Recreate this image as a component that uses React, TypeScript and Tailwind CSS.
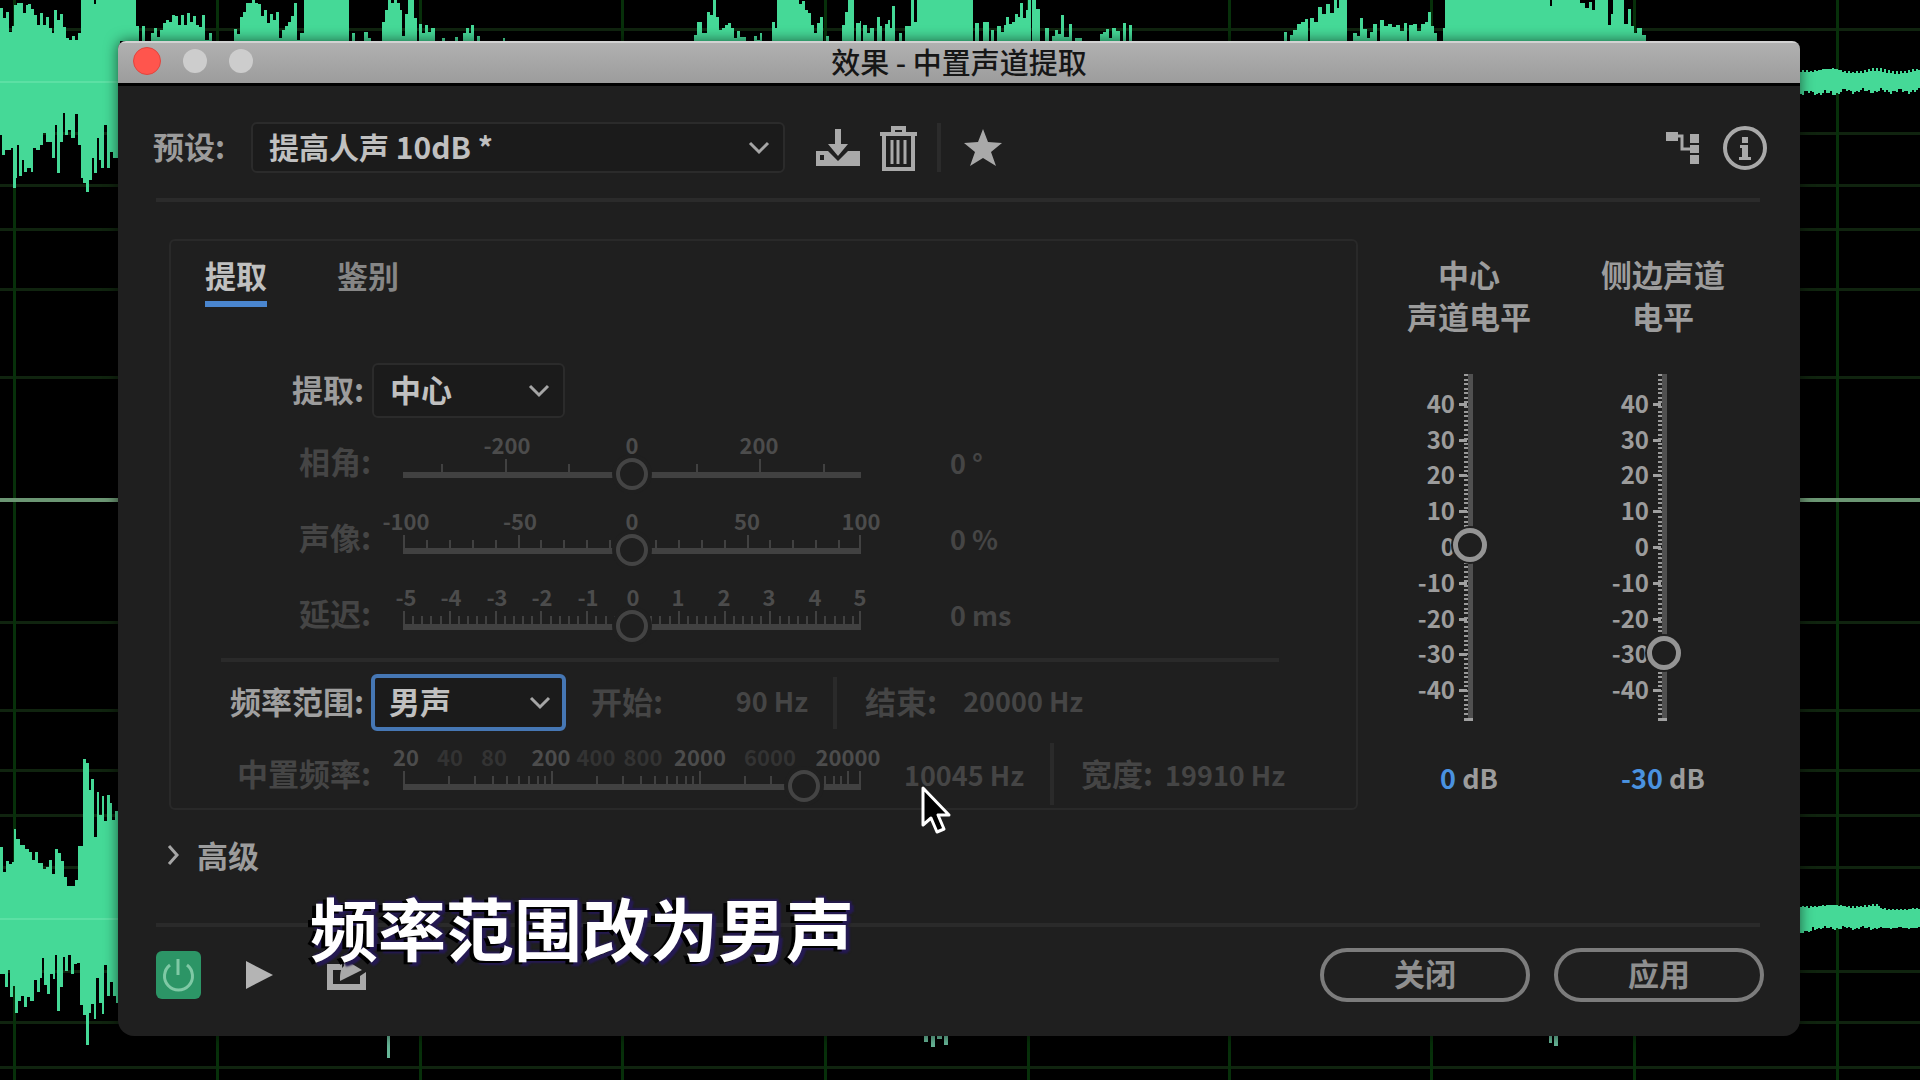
import type { ReactNode } from "react";
import clsx from "clsx";

type Point = [number, number];

const GRID_X = [14, 217, 420, 622, 825, 1028, 1229, 1431, 1634, 1837];
const GRID_Y = [29, 133, 185, 229, 289, 377, 622, 710, 770, 815, 867, 971, 1022, 1067];

// x, y pairs of the upper channel peaks
const TOP_PEAKS: Point[] = [
  [0, 8], [3, 18], [6, 12], [9, 32], [12, 26], [14, 5], [17, 3], [20, 3], [23, 13], [26, 5], [28, 4], [31, 9],
  [34, 15], [37, 25], [40, 13], [43, 25], [46, 17], [49, 28], [52, 33], [54, 10], [57, 20], [60, 14], [63, 27],
  [66, 38], [69, 42], [72, 36], [75, 42], [78, 33], [81, 0], [94, 4], [96, 0], [136, 26], [139, 41], [142, 26],
  [145, 41], [151, 33], [154, 28], [157, 37], [160, 30], [163, 23], [166, 20], [169, 22], [172, 15], [175, 16],
  [178, 25], [181, 15], [184, 25], [187, 13], [190, 22], [193, 16], [196, 25], [199, 27], [202, 15], [205, 40],
  [209, 33], [212, 41], [234, 29], [237, 34], [240, 17], [243, 12], [246, 3], [249, 3], [252, 0], [255, 3],
  [258, 4], [261, 16], [264, 10], [267, 23], [270, 14], [273, 20], [276, 12], [279, 38], [282, 30], [285, 26],
  [288, 22], [291, 16], [294, 3], [297, 40], [300, 33], [304, 0], [349, 41], [352, 33], [355, 41], [364, 32],
  [368, 38], [371, 41], [382, 22], [385, 10], [388, 0], [391, 3], [394, 0], [397, 3], [400, 10], [402, 36],
  [405, 14], [408, 0], [414, 18], [417, 41], [419, 24], [422, 33], [425, 25], [428, 32], [431, 28], [435, 41],
  [442, 38], [445, 41], [455, 37], [458, 41], [463, 33], [466, 28], [469, 33], [471, 25], [474, 41], [477, 36],
  [480, 41], [503, 38], [505, 41], [694, 35], [697, 22], [702, 33], [707, 12], [710, 15], [713, 0], [716, 17],
  [719, 30], [722, 28], [725, 25], [728, 23], [731, 28], [734, 38], [737, 31], [740, 37], [746, 41], [754, 36],
  [757, 40], [760, 33], [762, 41], [772, 22], [775, 28], [777, 0], [799, 4], [802, 1], [805, 10], [808, 13],
  [811, 25], [814, 33], [817, 23], [820, 17], [823, 41], [826, 36], [829, 41], [842, 25], [845, 12], [848, 0],
  [854, 41], [856, 23], [860, 21], [861, 41], [863, 25], [867, 33], [870, 28], [874, 41], [877, 17], [880, 26],
  [882, 41], [885, 24], [888, 20], [890, 28], [892, 6], [895, 41], [899, 33], [902, 41], [905, 26], [911, 0],
  [914, 22], [917, 0], [973, 41], [975, 23], [979, 41], [983, 22], [989, 41], [991, 30], [994, 41], [997, 26],
  [1001, 32], [1004, 25], [1006, 17], [1009, 24], [1012, 22], [1015, 14], [1018, 17], [1020, 3], [1023, 18],
  [1026, 10], [1028, 0], [1031, 41], [1032, 0], [1036, 9], [1040, 41], [1045, 28], [1049, 41], [1052, 36],
  [1055, 30], [1058, 34], [1061, 15], [1064, 37], [1069, 24], [1072, 41], [1075, 38], [1082, 41], [1100, 34],
  [1103, 32], [1106, 29], [1109, 38], [1112, 28], [1116, 31], [1120, 41], [1123, 23], [1126, 41], [1129, 25],
  [1132, 41], [1284, 32], [1287, 41], [1290, 35], [1293, 30], [1297, 24], [1301, 22], [1305, 19], [1308, 41],
  [1310, 18], [1314, 22], [1318, 7], [1322, 14], [1326, 4], [1330, 13], [1334, 0], [1337, 8], [1339, 0],
  [1347, 41], [1353, 33], [1357, 36], [1360, 18], [1363, 29], [1367, 38], [1370, 32], [1373, 24], [1377, 41],
  [1380, 20], [1384, 26], [1388, 24], [1392, 27], [1396, 25], [1400, 31], [1404, 23], [1407, 41], [1409, 25],
  [1413, 24], [1417, 31], [1421, 24], [1425, 22], [1428, 12], [1431, 26], [1434, 33], [1437, 41], [1443, 28],
  [1445, 0], [1550, 6], [1552, 0], [1580, 3], [1585, 8], [1589, 2], [1592, 10], [1595, 0], [1608, 25], [1611, 14],
  [1613, 0], [1624, 24], [1628, 9], [1631, 26], [1634, 33], [1637, 28], [1642, 35], [1646, 41],
];

const TOP_LEFT_FLOOR: Point[] = [
  [0, 135], [2, 155], [5, 150], [8, 150], [11, 148], [13, 188], [16, 178], [17, 145], [19, 176], [22, 160],
  [24, 172], [27, 168], [31, 172], [33, 148], [36, 150], [40, 145], [43, 133], [46, 142], [52, 158], [55, 125],
  [57, 173], [60, 142], [63, 113], [65, 135], [68, 130], [71, 138], [75, 114], [78, 145], [81, 178], [83, 183],
  [86, 192], [89, 180], [92, 158], [94, 173], [97, 138], [99, 160], [101, 168], [104, 125], [107, 168],
  [110, 152], [113, 158], [120, 158],
];

const BOTTOM_LEFT_TOP: Point[] = [
  [0, 847], [3, 872], [6, 861], [9, 864], [12, 862], [14, 829], [16, 839], [20, 845], [25, 849], [29, 852],
  [32, 860], [35, 852], [38, 863], [43, 869], [46, 867], [49, 860], [52, 874], [55, 849], [58, 853], [61, 861],
  [64, 877], [67, 886], [71, 886], [75, 880], [78, 846], [83, 759], [86, 763], [89, 790], [91, 779], [94, 837],
  [97, 792], [99, 815], [102, 796], [104, 821], [107, 795], [110, 803], [112, 820], [115, 811], [120, 811],
];

const BOTTOM_LEFT_FLOOR: Point[] = [
  [0, 974], [5, 987], [8, 970], [10, 997], [13, 986], [15, 1013], [18, 1001], [21, 996], [24, 1007], [27, 997],
  [30, 1001], [34, 980], [37, 992], [40, 978], [42, 958], [44, 985], [47, 994], [50, 974], [53, 979], [55, 955],
  [57, 1011], [60, 987], [63, 957], [65, 971], [68, 955], [71, 974], [74, 964], [77, 963], [80, 1005],
  [83, 1015], [86, 1045], [89, 1013], [91, 1004], [94, 1019], [96, 978], [99, 1003], [102, 1014], [104, 965],
  [107, 996], [110, 982], [113, 996], [116, 1003], [120, 1003],
];

function stepEdge(points: Point[]) {
  return points
    .map(([x, y], i) => {
      const next = points[i + 1];
      return `L${x} ${y}` + (next ? `L${next[0]} ${y}` : "");
    })
    .join("");
}

function block(top: Point[], floor: Point[]) {
  const back = [...floor]
    .reverse()
    .map(([x, y], i, all) => (i ? `L${all[i - 1][0]} ${y}L${x} ${y}` : `L${x} ${y}`))
    .join("");
  return `M${top[0][0]} ${top[0][1]}${stepEdge(top)}${back}Z`;
}

// low level noise at the quiet end of a channel
function noise(from: number, to: number, top: number, bottom: number, swing: number) {
  const upper: Point[] = [];
  const lower: Point[] = [];
  for (let x = from; x <= to; x += 2) {
    upper.push([x, top + Math.round(Math.sin(x * 2.3) * Math.cos(x * 0.7) * swing)]);
    lower.push([x, bottom + Math.round(Math.cos(x * 1.9) * Math.sin(x * 0.9) * swing)]);
  }
  return block(upper, lower);
}

function Waveform() {
  return (
    <svg
      className="absolute inset-0 h-full w-full"
      viewBox="0 0 1920 1080"
      preserveAspectRatio="none"
      aria-hidden="true"
    >
      {GRID_Y.map((y) => (
        <rect key={y} x="0" y={y - 1} width="1920" height="3" fill="#10240f" />
      ))}
      {GRID_X.map((x) => (
        <rect key={x} x={x - 1} y="0" width="3" height="1080" fill="#07300a" />
      ))}
      <rect x="0" y="498" width="1920" height="4" fill="#6b9673" />
      <g fill="#45d997">
        <path d={`M0 41${stepEdge(TOP_PEAKS)}V41Z`} />
        <path d={block([[0, 40], [120, 40]], TOP_LEFT_FLOOR)} />
        <path d={block(BOTTOM_LEFT_TOP, BOTTOM_LEFT_FLOOR)} />
        <path d={noise(1796, 1840, 70, 93, 3)} />
        <path d={noise(1838, 1922, 71, 91, 3)} />
        <path d={noise(1796, 1880, 906, 928, 2)} />
        <path d={noise(1796, 1812, 906, 932, 2)} />
        <path d={noise(1878, 1922, 909, 928, 1)} />
      </g>
      <g fill="#67b798">
        <rect x="387" y="1030" width="3" height="28" />
        <path d="M924 1030h4v12h-4zM931 1030h4v17h-4zM937 1030h5v9h-5zM944 1030h4v15h-4zM1549 1030h3v13h-3zM1554 1030h4v16h-4z" />
      </g>
      <rect x="0" y="81" width="118" height="2" fill="#5ce0a4" />
      <rect x="0" y="918" width="118" height="2" fill="#5ce0a4" />
    </svg>
  );
}

interface DropdownProps {
  id: string;
  options: string[];
  focused?: boolean;
  className?: string;
}

function Dropdown({ id, options, focused, className }: DropdownProps) {
  return (
    <div className={clsx("grid items-center", className)}>
      <select
        id={id}
        className={clsx(
          "col-start-1 row-start-1 h-full w-full appearance-none rounded-md bg-[#1b1b1b] pb-1 font-bold text-[#c0c0c0] outline-none",
          focused ? "border-4 border-[#4677b4] px-[14px]" : "border-2 border-[#2b2b2b] px-4",
        )}
      >
        {options.map((o) => (
          <option key={o}>{o}</option>
        ))}
      </select>
      <svg
        className="pointer-events-none col-start-1 row-start-1 mr-[15px] h-4 w-[22px] justify-self-end"
        viewBox="0 0 22 16"
        fill="none"
        stroke="#a6a6a6"
        strokeWidth="3"
      >
        <path d="M2 3l9 9 9-9" />
      </svg>
    </div>
  );
}

interface Tick {
  x: number;
  major?: boolean;
}

interface ScaleLabel {
  x: number;
  text: string;
  faint?: boolean;
}

interface ScaleSliderProps {
  id: string;
  min: number;
  max: number;
  value: number;
  ticks: Tick[];
  labels: ScaleLabel[];
}

const TRACK = 458;

function ScaleSlider({ id, min, max, value, ticks, labels }: ScaleSliderProps) {
  return (
    <div className="relative ml-8 h-[76px] w-[458px] shrink-0">
      <svg className="h-full w-full overflow-visible" viewBox="0 0 458 76">
        <rect x="0" y="51" width={TRACK} height="6" fill="#414141" />
        {ticks.map((t) => (
          <rect
            key={t.x}
            x={Math.min(Math.round(t.x), TRACK - 2)}
            y={t.major ? 38 : 43}
            width="2"
            height={t.major ? 14 : 9}
            fill="#414141"
          />
        ))}
        {labels.map((l) => (
          <text
            key={l.text}
            x={l.x}
            y="33"
            textAnchor="middle"
            className={clsx("text-[22px] font-bold", l.faint ? "fill-[#333333]" : "fill-[#4c4c4c]")}
          >
            {l.text}
          </text>
        ))}
      </svg>
      <input
        id={id}
        type="range"
        min={min}
        max={max}
        step="any"
        defaultValue={value}
        disabled
        className="absolute top-[37px] -left-4 h-8 w-[490px] appearance-none bg-transparent [&::-webkit-slider-thumb]:h-8 [&::-webkit-slider-thumb]:w-8 [&::-webkit-slider-thumb]:appearance-none [&::-webkit-slider-thumb]:rounded-full [&::-webkit-slider-thumb]:border-4 [&::-webkit-slider-thumb]:border-[#444444] [&::-webkit-slider-thumb]:bg-[#1f1f1f] [&::-webkit-slider-thumb]:shadow-[0_0_0_4px_#1f1f1f]"
      />
    </div>
  );
}

function span(count: number, majorEvery: number): Tick[] {
  return Array.from({ length: count + 1 }, (_, i) => ({
    x: (i * TRACK) / count,
    major: i % majorEvery === 0,
  }));
}

const PHASE_TICKS: Tick[] = [-300, -200, -100, 100, 200, 300].map((v) => ({
  x: TRACK / 2 + (v / 720) * TRACK,
  major: Math.abs(v) === 200,
}));

// log scale, the track runs slightly past 20 kHz
const DECADE = 148;

const FREQ_TICKS: Tick[] = [0, 1, 2].flatMap((decade) =>
  [1, 2, 3, 4, 5, 6, 7, 8, 9].map((k) => ({
    x: (decade + Math.log10(k)) * DECADE,
    major: k === 1,
  })),
);
FREQ_TICKS.push({ x: 3 * DECADE, major: true }, { x: TRACK, major: true });

const FREQ_LABELS: ScaleLabel[] = [
  { x: 3, text: "20" },
  { x: 47, text: "40", faint: true },
  { x: 91, text: "80", faint: true },
  { x: 148, text: "200" },
  { x: 193, text: "400", faint: true },
  { x: 240, text: "800", faint: true },
  { x: 297, text: "2000" },
  { x: 367, text: "6000", faint: true },
  { x: 445, text: "20000" },
];

interface ParamRowProps {
  label: string;
  unit: string;
  slider: Omit<ScaleSliderProps, "id">;
  id: string;
}

function ParamRow({ label, unit, slider, id }: ParamRowProps) {
  return (
    <div className="flex text-[#454545]">
      <label htmlFor={id} className="w-[200px] pt-2 text-right leading-[64px]">
        {label}
      </label>
      <ScaleSlider id={id} {...slider} />
      <output htmlFor={id} className="ml-[89px] pt-[10px] text-[27px] leading-[64px]">
        {unit}
      </output>
    </div>
  );
}

const LEVELS = [40, 30, 20, 10, 0, -10, -20, -30, -40];

interface LevelProps {
  id: string;
  lines: [string, string];
  value: number;
}

function Level({ id, lines, value }: LevelProps) {
  return (
    <div className="flex flex-col items-center pt-[14px]">
      <label htmlFor={id} className="text-center leading-[42px]">
        {lines[0]}
        <br />
        {lines[1]}
      </label>
      <div className="relative mt-5 h-[380px] w-[100px]">
        <svg className="h-full w-full overflow-visible" viewBox="0 0 100 380">
          <rect x="49" y="17" width="5" height="346" fill="#505050" />
          {Array.from({ length: 76 }, (_, i) => (
            <rect key={i} x="45" y={17 + Math.round(i * 4.58)} width="4" height="2" fill="#9a9a9a" />
          ))}
          <rect x="45" y="361" width="9" height="3" fill="#a0a0a0" />
          {LEVELS.map((l) => (
            <g key={l}>
              <rect x="40" y={189 - Math.round(l * 3.58)} width="8" height="3" fill="#a0a0a0" />
              <text
                x="36"
                y={199 - Math.round(l * 3.58)}
                textAnchor="end"
                className="fill-[#9c9c9c] text-[24px] font-bold"
              >
                {l}
              </text>
            </g>
          ))}
        </svg>
        <input
          id={id}
          type="range"
          min={-48}
          max={48}
          defaultValue={value}
          className="absolute -top-0.5 left-[34px] h-[380px] w-[34px] appearance-none bg-transparent [direction:rtl] [writing-mode:vertical-lr] [&::-webkit-slider-thumb]:h-[34px] [&::-webkit-slider-thumb]:w-[34px] [&::-webkit-slider-thumb]:appearance-none [&::-webkit-slider-thumb]:rounded-full [&::-webkit-slider-thumb]:border-[5px] [&::-webkit-slider-thumb]:border-[#949494] [&::-webkit-slider-thumb]:bg-[#1f1f1f] [&::-webkit-slider-thumb]:shadow-[0_0_0_2px_#1f1f1f]"
        />
      </div>
      <output htmlFor={id} className="mt-[21px] text-[27px] leading-10">
        <span className="text-[#4a92e0]">{value}</span> dB
      </output>
    </div>
  );
}

function IconButton({ label, className, children }: { label: string; className?: string; children: ReactNode }) {
  return (
    <button type="button" aria-label={label} className={clsx("shrink-0", className)}>
      {children}
    </button>
  );
}

function Toolbar() {
  return (
    <div className="flex h-[51px] items-center pr-[33px] pl-[35px]">
      <label htmlFor="preset" className="w-[98px] pb-1">
        预设:
      </label>
      <Dropdown id="preset" options={["提高人声 10dB *"]} className="h-[51px] w-[534px] text-[30px]" />
      <IconButton label="保存预设" className="ml-[30px]">
        <svg className="h-[38px] w-[46px]" viewBox="0 0 46 38" fill="#a9a9a9">
          <path d="M20 0h6v15h7L23 27 13 15h7z" />
          <path fillRule="evenodd" d="M1 22h12l10 10 10-10h12v15H1zM5 26v5h4v-5z" />
        </svg>
      </IconButton>
      <IconButton label="删除预设" className="ml-[19px]">
        <svg className="h-[46px] w-[37px]" viewBox="0 0 37 46" fill="none" stroke="#a9a9a9">
          <path d="M0 9h37M13 8V3h11v5" strokeWidth="4" />
          <path d="M4 10v34h29V10" strokeWidth="4" />
          <path d="M12 15v24M18 15v24M25 15v24" strokeWidth="3" />
        </svg>
      </IconButton>
      <div className="ml-5 h-[49px] w-1 bg-[#2b2b2b]" />
      <IconButton label="收藏" className="ml-[22px]">
        <svg className="h-[38px] w-10" viewBox="0 0 40 38" fill="#a9a9a9">
          <path d="M20 0l5 13 14 1-11 9 5 14-13-8-13 8 5-14L1 14l14-1z" />
        </svg>
      </IconButton>
      <IconButton label="通道映射" className="ml-auto">
        <svg className="h-9 w-[34px]" viewBox="0 0 34 36" fill="#a9a9a9">
          <path d="M0 2h12v9H0zM24 4h9v9h-9zM24 15h9v8h-9zM24 25h9v9h-9z" />
          <path d="M11 6h5v13h9" fill="none" stroke="#a9a9a9" strokeWidth="3" />
        </svg>
      </IconButton>
      <IconButton label="信息" className="ml-[23px]">
        <svg className="h-11 w-11" viewBox="0 0 44 44" fill="#a9a9a9">
          <circle cx="22" cy="22" r="20" fill="none" stroke="#a9a9a9" strokeWidth="4" />
          <path d="M19 11h6v6h-6zM17 19h8v12h3v3H16v-3h3v-9h-2z" />
        </svg>
      </IconButton>
    </div>
  );
}

function ExtractPanel() {
  return (
    <section className="min-w-0 flex-1 rounded-md border-2 border-[#292929]">
      <div role="tablist" className="flex gap-[70px] pt-[14px] pl-[34px]">
        <button
          type="button"
          role="tab"
          aria-selected="true"
          className="border-b-[6px] border-[#4a86cf] pb-[6px] leading-10 text-[#c0c0c0]"
        >
          提取
        </button>
        <button
          type="button"
          role="tab"
          aria-selected="false"
          className="border-b-[6px] border-transparent pb-[6px] leading-10 text-[#868686]"
        >
          鉴别
        </button>
      </div>

      <div className="mt-[56px] flex items-center">
        <label htmlFor="extract" className="w-[193px] pb-1 text-right">
          提取:
        </label>
        <Dropdown id="extract" options={["中心", "左", "右"]} className="ml-2 h-[55px] w-[193px]" />
      </div>

      <div className="mt-[3px]">
        <ParamRow
          id="phase"
          label="相角:"
          unit="0 °"
          slider={{
            min: -360,
            max: 360,
            value: 0,
            ticks: PHASE_TICKS,
            labels: [
              { x: 104, text: "-200" },
              { x: 229, text: "0" },
              { x: 356, text: "200" },
            ],
          }}
        />
        <ParamRow
          id="pan"
          label="声像:"
          unit="0 %"
          slider={{
            min: -100,
            max: 100,
            value: 0,
            ticks: span(20, 5),
            labels: [
              { x: 3, text: "-100" },
              { x: 117, text: "-50" },
              { x: 229, text: "0" },
              { x: 344, text: "50" },
              { x: 458, text: "100" },
            ],
          }}
        />
        <ParamRow
          id="delay"
          label="延迟:"
          unit="0 ms"
          slider={{
            min: -5,
            max: 5,
            value: 0,
            ticks: span(50, 5),
            labels: [-5, -4, -3, -2, -1, 0, 1, 2, 3, 4, 5].map((v) => ({
              x: Math.round(230 + v * 45.4),
              text: String(v),
            })),
          }}
        />
      </div>

      <div className="mt-[9px] mr-[77px] ml-[50px] h-1 bg-[#2a2a2a]" />

      <div className="mt-3 flex items-center text-[#454545]">
        <label htmlFor="range" className="w-[193px] pb-1 text-right text-[#a0a0a0]">
          频率范围:
        </label>
        <Dropdown id="range" focused options={["男声", "女声", "低音", "全频谱"]} className="ml-[7px] h-[57px] w-[195px]" />
        <span className="ml-[25px] pb-1">开始:</span>
        <span className="w-[145px] pb-1 text-right text-[27px]">90 Hz</span>
        <div className="ml-[25px] h-[52px] w-1 bg-[#2a2a2a]" />
        <span className="ml-7 pb-1">结束:</span>
        <span className="ml-[26px] pb-1 text-[27px]">20000 Hz</span>
      </div>

      <div className="mt-[2px] flex h-[75px] text-[#454545]">
        <label htmlFor="center" className="w-[200px] pt-2 text-right leading-[64px]">
          中置频率:
        </label>
        <ScaleSlider id="center" min={0} max={100} value={87.5} ticks={FREQ_TICKS} labels={FREQ_LABELS} />
        <span className="ml-[43px] pt-[10px] text-[27px] leading-[64px]">10045 Hz</span>
        <div className="mt-[10px] ml-[26px] h-[62px] w-1 bg-[#2a2a2a]" />
        <span className="ml-[27px] pt-2 leading-[64px]">宽度:</span>
        <span className="ml-3 pt-[10px] text-[27px] leading-[64px]">19910 Hz</span>
      </div>
    </section>
  );
}

function Footer() {
  return (
    <footer className="flex items-center pt-[21px] pr-9 pb-[34px] pl-[38px]">
      <IconButton label="切换开关状态" className="rounded-md bg-[#2c9566]">
        <svg className="h-12 w-[45px]" viewBox="0 0 45 48" fill="none" stroke="#7fc9a5" strokeWidth="3">
          <path d="M14 14a14 14 0 1 0 17 0M22 8v16" />
        </svg>
      </IconButton>
      <IconButton label="播放" className="ml-[45px]">
        <svg className="h-7 w-[27px]" viewBox="0 0 27 28" fill="#b4b4b4">
          <path d="M0 0l27 14L0 28z" />
        </svg>
      </IconButton>
      <IconButton label="循环播放" className="ml-[54px]">
        <svg className="h-[38px] w-[39px]" viewBox="0 0 39 38" fill="#a9a9a9">
          <path d="M0 8h15v6H6v14h27V20l6-4v18H0z" />
          <path d="M17 3l18 11-18 9-4 2c0-6 0-12 4-15z" />
        </svg>
      </IconButton>
      <button
        type="button"
        className="ml-auto h-[54px] w-[210px] rounded-full border-4 border-[#7c7c7c] pb-1 text-[#8f8f8f]"
      >
        关闭
      </button>
      <button
        type="button"
        className="ml-6 h-[54px] w-[210px] rounded-full border-4 border-[#7c7c7c] pb-1 text-[#8f8f8f]"
      >
        应用
      </button>
    </footer>
  );
}

export default function App() {
  return (
    <div className="relative min-h-screen overflow-hidden bg-black pt-[41px] pr-[120px] pb-[43px] pl-[118px] font-['Noto_Sans_CJK_SC',sans-serif]">
      <Waveform />

      <main className="relative overflow-hidden rounded-t-lg rounded-b-2xl bg-[#1f1f1f] text-[31px] leading-10 font-bold text-[#9c9c9c] shadow-[0_0_14px_rgba(0,0,0,0.6)]">
        <header className="grid h-[45px] grid-cols-[1fr_auto_1fr] items-center border-t-2 border-b-[3px] border-t-[#d2d2d2] border-b-black bg-linear-to-b from-[#b0b0b0] to-[#9c9c9c] px-[15px] pb-1">
          <div className="flex items-center gap-[22px]">
            <button type="button" aria-label="关闭窗口" className="h-7 w-7 rounded-full border border-[#e0453e] bg-[#ff554d]" />
            <button type="button" aria-label="最小化" className="h-6 w-6 rounded-full bg-[#cdcdcd]" />
            <button type="button" aria-label="缩放" className="h-6 w-6 rounded-full bg-[#cdcdcd]" />
          </div>
          <h1 className="text-[29px] leading-9 font-medium whitespace-pre text-[#161616]">效果 - 中置声道提取</h1>
        </header>

        <div className="pt-9">
          <Toolbar />
          <div className="mt-[25px] mr-10 ml-[38px] h-1 bg-[#2b2b2b]" />
        </div>

        <div className="mt-[37px] flex gap-[14px] pr-10 pl-[51px]">
          <ExtractPanel />
          <div className="grid w-[388px] grid-cols-2">
            <Level id="center-level" lines={["中心", "声道电平"]} value={0} />
            <Level id="side-level" lines={["侧边声道", "电平"]} value={-30} />
          </div>
        </div>

        <button type="button" aria-expanded="false" className="mt-[25px] ml-[49px] flex items-center gap-[17px]">
          <svg className="h-6 w-[13px]" viewBox="0 0 13 24" fill="none" stroke="#a6a6a6" strokeWidth="3">
            <path d="M2 3l8 9-8 9" />
          </svg>
          高级
        </button>

        <div className="mt-12 mr-10 ml-[38px] h-1 bg-[#2a2a2a]" />
        <Footer />
      </main>

      {/* caption over the window */}
      <p className="pointer-events-none absolute top-[887px] left-[310px] text-[68px] leading-[80px] font-bold whitespace-nowrap text-white [text-shadow:-4px_2px_0_#000,4px_2px_2px_#251a52,2px_4px_2px_#251a52,2px_-2px_2px_#251a52]">
        频率范围改为男声
      </p>

      <svg className="pointer-events-none absolute top-[784px] left-[920px] h-[50px] w-8" viewBox="0 0 32 50">
        <path
          d="M3 4v37l8-7 6 14 7-3-6-14h11z"
          fill="#000"
          stroke="#fff"
          strokeWidth="3"
          strokeLinejoin="round"
        />
      </svg>
    </div>
  );
}
